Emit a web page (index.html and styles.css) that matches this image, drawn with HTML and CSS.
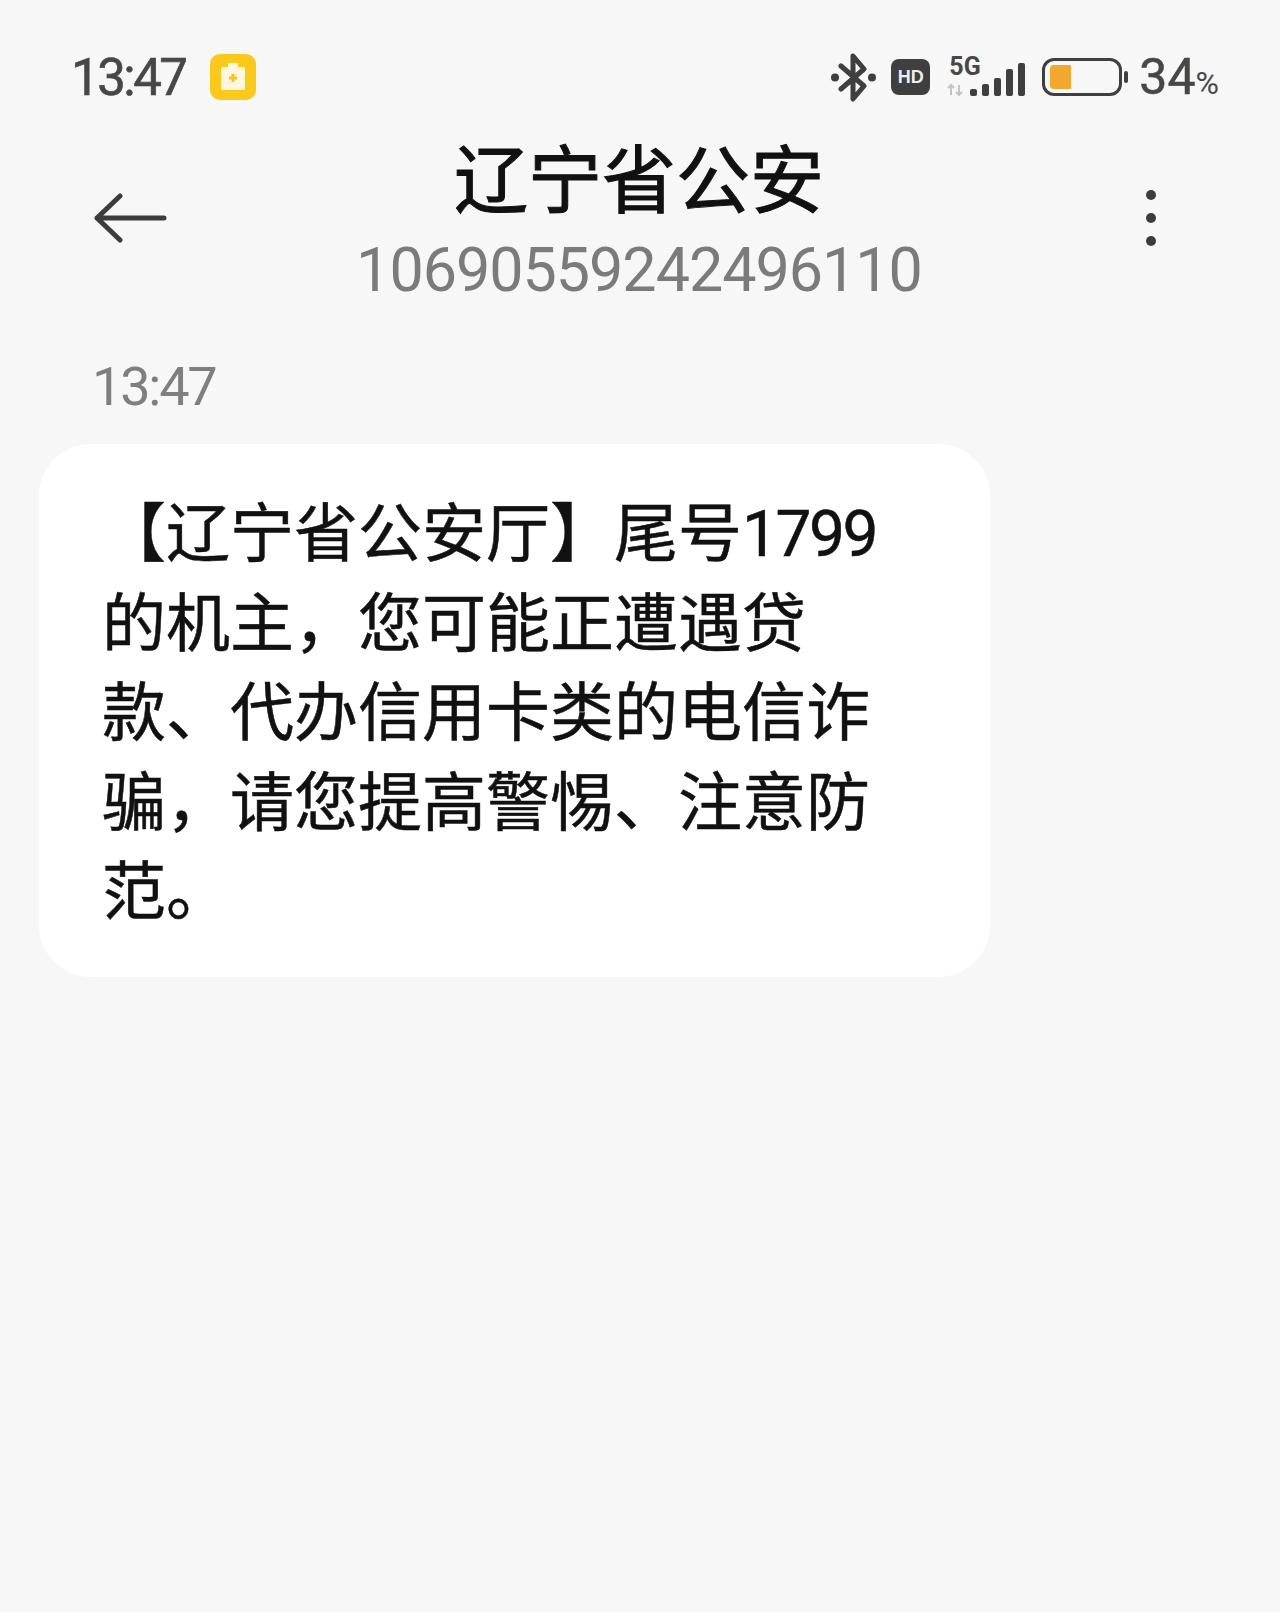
FILE: index.html
```html
<!DOCTYPE html>
<html lang="zh-CN">
<head>
<meta charset="utf-8">
<title>辽宁省公安</title>
<link rel="stylesheet" href="styles.css">
</head>
<body>
<div class="screen">
  <header class="status">
    <div class="status-left">
      <span class="clock">13:47</span>
      <svg class="app-badge" viewBox="0 0 46 46"><rect width="46" height="46" rx="10" fill="#fbc91c"/><path d="M18 9h10v4h5a2 2 0 0 1 2 2v19a2 2 0 0 1-2 2H13a2 2 0 0 1-2-2V15a2 2 0 0 1 2-2h5z" fill="#fff8dc"/><path d="M23 20v8M19 24h8" stroke="#f3c32a" stroke-width="3"/></svg>
    </div>
    <div class="status-right">
      <svg class="bt" viewBox="0 0 45 49"><path d="M10 13 33 33 22 46V3l11 13-23 20" fill="none" stroke="#3f3f3f" stroke-width="5" stroke-linejoin="round" stroke-linecap="round"/><circle cx="4" cy="24.500" r="4" fill="#3f3f3f"/><circle cx="41" cy="24.500" r="4" fill="#3f3f3f"/></svg>
      <span class="hd">HD</span>
      <div class="signal-wrap">
        <svg class="signal" viewBox="0 0 78 38"><path d="M1 30l3-3 3 3M4 27v10M9 34l3 3 3-3M12 37V27" stroke="#c4c4c4" stroke-width="2" fill="none"/><rect x="23" y="31" width="7" height="7" rx="2" fill="#3f3f3f"/><rect x="35" y="26" width="7" height="12" rx="2" fill="#3f3f3f"/><rect x="47" y="20" width="7" height="18" rx="2" fill="#3f3f3f"/><rect x="59" y="11" width="7" height="27" rx="2" fill="#3f3f3f"/><rect x="71" y="5" width="7" height="33" rx="2" fill="#3f3f3f"/></svg>
        <span class="net">5G</span>
      </div>
      <span class="battery"><span class="battery-fill"></span></span>
      <span class="battery-cap"></span>
      <span class="pct">34<small>%</small></span>
    </div>
  </header>

  <nav class="bar">
    <svg class="back" viewBox="0 0 74 52"><path d="M27 3 4 25l23 22M4 25h67" fill="none" stroke="#3c3c3c" stroke-width="5" stroke-linecap="round" stroke-linejoin="round"/></svg>
    <div class="contact">
      <h1 class="name">辽宁省公安</h1>
      <p class="number">10690559242496110</p>
    </div>
    <div class="more"><i></i><i></i><i></i></div>
  </nav>

  <main class="thread">
    <time class="stamp">13:47</time>
    <div class="bubble">【辽宁省公安厅】尾号<span class="digits">1799</span>的机主，您可能正遭遇贷款、代办信用卡类的电信诈骗，请您提高警惕、注意防范。</div>
  </main>
</div>
</body>
</html>
```

FILE: styles.css
```css
* { box-sizing: border-box; }
html, body { margin: 0; padding: 0; }
body {
  background: #f7f7f7;
  font-family: Roboto, "Noto Sans CJK SC", sans-serif;
}
.screen { width: 1280px; height: 1612px; background: #f7f7f7; overflow: hidden; }

.status {
  display: flex;
  justify-content: space-between;
  align-items: center;
  height: 78px;
  margin-top: 38px;
  padding: 0 61px 0 71px;
}
.status-left, .status-right { display: flex; align-items: center; }
.clock { font-size: 51px; line-height: 1; color: #474747; letter-spacing: -2.5px; -webkit-text-stroke: 0.6px #474747; }
.app-badge { width: 46px; height: 46px; margin-left: 24px; }
.bt { width: 45px; height: 49px; }
.hd {
  display: flex; align-items: center; justify-content: center;
  width: 39px; height: 36px; margin-left: 15px;
  background: #3f3f3f; border-radius: 8px;
  color: #eee; font: 700 18px "Liberation Sans", sans-serif;
}
.signal-wrap { position: relative; width: 78px; height: 38px; margin-left: 17px; }
.signal { display: block; width: 78px; height: 38px; }
.net {
  position: absolute; left: 2px; top: -4px;
  font-size: 25px; line-height: 1; font-weight: 700; color: #474747;
}
.battery {
  display: block; width: 80px; height: 38px; margin-left: 17px; padding: 4px 5px;
  border: 3px solid #3f3f3f; border-radius: 12px;
}
.battery-fill { display: block; width: 21px; height: 100%; background: #f2a72e; border-radius: 4px 1px 1px 4px; }
.battery-cap { width: 4px; height: 12px; margin-left: 2px; background: #3f3f3f; border-radius: 2px; }
.pct { margin-left: 11px; font-size: 50px; line-height: 1; color: #474747; -webkit-text-stroke: 0.5px #474747; }
.pct small { font-size: 32px; -webkit-text-stroke: 0; }

.bar {
  position: relative;
  display: grid;
  grid-template-columns: 1fr auto 1fr;
  align-items: start;
  padding: 0 124px 0 93px;
}
.back { width: 74px; height: 52px; margin-top: 77px; }
.contact { text-align: center; padding-top: 16px; margin-left: 29px; }
.name { margin: 0; font-size: 74px; line-height: 100px; font-weight: 400; color: #111; -webkit-text-stroke: 1px #111; }
.number { margin: 0; font-size: 61px; line-height: 76px; color: #7b7b7b; letter-spacing: -1px; }
.more { display: flex; flex-direction: column; gap: 13px; width: 10px; margin-top: 74px; justify-self: end; }
.more i { display: block; width: 10px; height: 10px; border-radius: 50%; background: #3c3c3c; }

.thread { padding: 0 39px; margin-top: 44px; }
.stamp { display: block; margin-left: 53px; font-size: 54px; line-height: 70px; color: #7f7f7f; letter-spacing: -2.2px; }
.bubble {
  width: 951px;
  height: 533px;
  margin-top: 22px;
  padding: 46px 98px 0 63px;
  background: #fff;
  border-radius: 52px;
  font-size: 64px;
  line-height: 89.5px;
  color: #111;
  -webkit-text-stroke: 0.5px #111;
}
.digits { letter-spacing: -2.5px; }
```
